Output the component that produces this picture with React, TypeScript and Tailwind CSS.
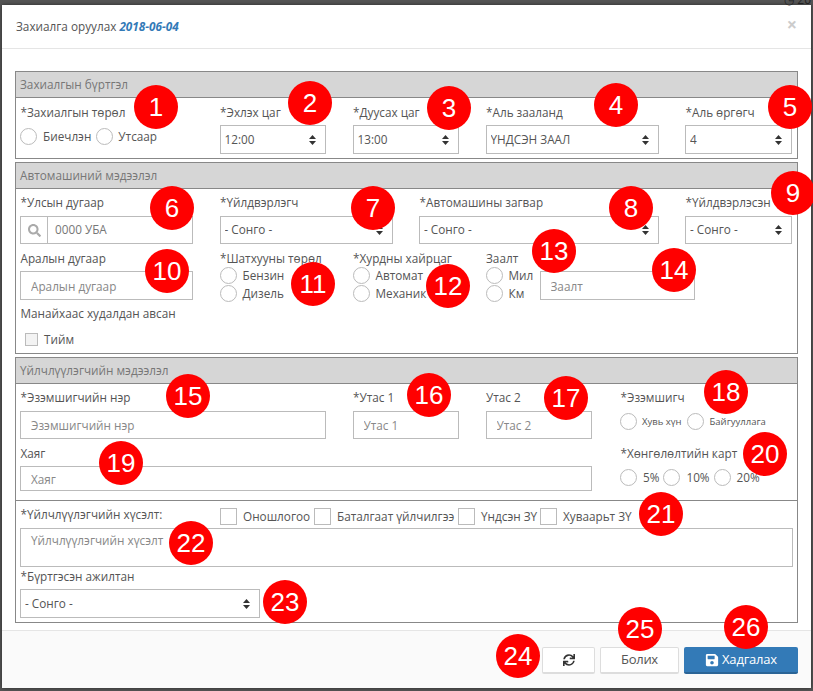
import type { ReactNode } from "react";
import { FaSave, FaSearch, FaSync } from "react-icons/fa";

const BADGES = [
  { n: 1, pos: "left-[134px] top-[85px]" },
  { n: 2, pos: "left-[288px] top-[81px]" },
  { n: 3, pos: "left-[427px] top-[86px]" },
  { n: 4, pos: "left-[594px] top-[83px]" },
  { n: 5, pos: "left-[768px] top-[85px]" },
  { n: 6, pos: "left-[150px] top-[186px]" },
  { n: 7, pos: "left-[351px] top-[186px]" },
  { n: 8, pos: "left-[609px] top-[186px]" },
  { n: 9, pos: "left-[771px] top-[171px]" },
  { n: 10, pos: "left-[145px] top-[249px]" },
  { n: 11, pos: "left-[291px] top-[262px]" },
  { n: 12, pos: "left-[426px] top-[264px]" },
  { n: 13, pos: "left-[532px] top-[229px]" },
  { n: 14, pos: "left-[652px] top-[248px]" },
  { n: 15, pos: "left-[166px] top-[374px]" },
  { n: 16, pos: "left-[407px] top-[373px]" },
  { n: 17, pos: "left-[544px] top-[376px]" },
  { n: 18, pos: "left-[704px] top-[370px]" },
  { n: 19, pos: "left-[99px] top-[441px]" },
  { n: 20, pos: "left-[743px] top-[432px]" },
  { n: 21, pos: "left-[639px] top-[492px]" },
  { n: 22, pos: "left-[169px] top-[521px]" },
  { n: 23, pos: "left-[263px] top-[580px]" },
  { n: 24, pos: "left-[496px] top-[634px]" },
  { n: 25, pos: "left-[618px] top-[607px]" },
  { n: 26, pos: "left-[724px] top-[605px]" }
];

function Label({ children, className = "" }: { children: ReactNode; className?: string }) {
  return <div className={`h-[17px] whitespace-nowrap pl-[0.5px] text-[11.75px] leading-[17px] ${className}`}>{children}</div>;
}

function Radio({ label, className = "ml-[6px]" }: { label: string; className?: string }) {
  return (
    <label className="flex h-[17px] items-center">
      <span className="h-[17px] w-[17px] shrink-0 rounded-full border border-[#bbb] bg-white" />
      <span className={`whitespace-nowrap leading-[17px] ${className}`}>{label}</span>
    </label>
  );
}

function Check({ label, className = "" }: { label: string; className?: string }) {
  return (
    <label className={`flex items-center ${className}`}>
      <span className="h-[17px] w-[17px] shrink-0 border border-[#bbb] bg-white" />
      <span className="ml-[6px] whitespace-nowrap">{label}</span>
    </label>
  );
}

function TextInput({ placeholder, className = "h-[29px]" }: { placeholder: string; className?: string }) {
  return (
    <input
      placeholder={placeholder}
      className={`block w-full border border-[#bbb] bg-white px-[10px] text-[11.75px] outline-none placeholder:text-[#888] ${className}`}
    />
  );
}

function Select({ value, className = "h-[29px]" }: { value: string; className?: string }) {
  return (
    <div className={`relative w-full ${className}`}>
      <select className="block h-full w-full appearance-none rounded-none border border-[#bbb] bg-white pl-[4px] pr-[20px] text-[11.75px] text-[#555] outline-none">
        <option>{value}</option>
      </select>
      <svg className="absolute right-[10px] top-1/2 -translate-y-1/2" width="7" height="10" viewBox="0 0 7 10" fill="#333">
        <path d="M3.5 0 7 4H0zM3.5 10 0 6h7z" />
      </svg>
    </div>
  );
}

function SectionHead({ children }: { children: ReactNode }) {
  return (
    <div className="h-[26px] border-b border-[#888] bg-[#d6d6d6] pl-[4px] text-[11.75px] leading-[25px] text-[#777]">
      {children}
    </div>
  );
}

const GRID = "grid grid-cols-12 gap-x-[26.5px]";

export default function App() {
  return (
    <div className="relative h-[691px] w-[813px] overflow-hidden bg-[#555] pl-[2px] pt-[5px] font-['Open_Sans',sans-serif] text-[11.75px] text-[#555]">
      <span className="absolute right-[2px] top-[-9px] text-[12px] text-[#222]">◷ 20</span>

      <div className="flex h-[683px] w-[809px] flex-col bg-white shadow-[0_0_4px_rgba(0,0,0,0.5)]">
        <div className="flex h-[44px] items-center justify-between border-b border-[#e5e5e5] pl-[14px] pr-[14px]">
          <div>
            Захиалга оруулах <b className="italic text-[#337ab7]">2018-06-04</b>
          </div>
          <span className="mb-[5px] text-[18px] font-bold leading-none text-[#ccc]">×</span>
        </div>

        <div className="flex-1 px-[13px] pt-[22px]">
          <div className="w-[783px] border border-[#888]">
            <SectionHead>Захиалгын бүртгэл</SectionHead>
            <div className={`${GRID} pb-[4px] pl-[4px] pr-[5.5px] pt-[6px]`}>
              <div className="col-span-3">
                <Label>*Захиалгын төрөл</Label>
                <div className="mt-[7px] flex gap-[5px]">
                  <Radio label="Биечлэн" />
                  <Radio label="Утсаар" className="ml-[5px]" />
                </div>
              </div>
              <div className="col-span-2">
                <Label className="mb-[4px]">*Эхлэх цаг</Label>
                <Select value="12:00" />
              </div>
              <div className="col-span-2">
                <Label className="mb-[4px]">*Дуусах цаг</Label>
                <Select value="13:00" />
              </div>
              <div className="col-span-3">
                <Label className="mb-[4px]">*Аль зааланд</Label>
                <Select value="ҮНДСЭН ЗААЛ" />
              </div>
              <div className="col-span-2">
                <Label className="mb-[4px]">*Аль өргөгч</Label>
                <Select value="4" />
              </div>
            </div>
          </div>

          <div className="mt-[3px] w-[783px] border border-[#888]">
            <SectionHead>Автомашиний мэдээлэл</SectionHead>
            <div className={`${GRID} pl-[4px] pr-[5.5px] pt-[5px]`}>
              <div className="col-span-3">
                <Label className="mb-[5px]">*Улсын дугаар</Label>
                <div className="flex h-[28px] border border-[#bbb] bg-white">
                  <span className="flex w-[27px] items-center justify-center border-r border-[#bbb] text-[#aaa]">
                    <FaSearch size={13} />
                  </span>
                  <input placeholder="0000 УБА" className="min-w-0 flex-1 px-[7px] text-[11.75px] outline-none placeholder:text-[#777]" />
                </div>
              </div>
              <div className="col-span-3">
                <Label className="mb-[5px]">*Үйлдвэрлэгч</Label>
                <Select value="- Сонго -" className="h-[28px]" />
              </div>
              <div className="col-span-4">
                <Label className="mb-[5px]">*Автомашины загвар</Label>
                <Select value="- Сонго -" className="h-[28px]" />
              </div>
              <div className="col-span-2">
                <Label className="mb-[5px]">*Үйлдвэрлэсэн</Label>
                <Select value="- Сонго -" className="h-[28px]" />
              </div>
            </div>
            <div className={`${GRID} mt-[6px] pl-[4px] pr-[5.5px]`}>
              <div className="col-span-3">
                <Label className="mb-[4px]">Аралын дугаар</Label>
                <TextInput placeholder="Аралын дугаар" />
              </div>
              <div className="col-span-2">
                <Label>*Шатхууны төрөл</Label>
                <div className="flex flex-col gap-px">
                  <Radio label="Бензин" />
                  <Radio label="Дизель" />
                </div>
              </div>
              <div className="col-span-2">
                <Label>*Хурдны хайрцаг</Label>
                <div className="flex flex-col gap-px">
                  <Radio label="Автомат" />
                  <Radio label="Механик" />
                </div>
              </div>
              <div className="col-span-5 flex">
                <div className="w-[54px]">
                  <Label>Заалт</Label>
                  <div className="flex flex-col gap-px">
                    <Radio label="Мил" />
                    <Radio label="Км" />
                  </div>
                </div>
                <div className="w-[155px] pt-[21px]">
                  <TextInput placeholder="Заалт" />
                </div>
              </div>
            </div>
            <div className="px-[4px] pb-[7px] pt-[3px]">
              <Label>Манайхаас худалдан авсан</Label>
              <label className="ml-[5px] mt-[11px] flex h-[13px] items-center">
                <span className="h-[13px] w-[13px] border border-[#bbb] bg-[#f3f3f3]" />
                <span className="ml-[6px]">Тийм</span>
              </label>
            </div>
          </div>

          <div className="mt-[3px] w-[783px] border border-[#888]">
            <SectionHead>Үйлчлүүлэгчийн мэдээлэл</SectionHead>
            <div className={`${GRID} pb-[9px] pl-[4px] pr-[5.5px] pt-[5px]`}>
              <div className="col-span-5">
                <Label className="mb-[5px]">*Эзэмшигчийн нэр</Label>
                <TextInput placeholder="Эзэмшигчийн нэр" className="h-[28px]" />
              </div>
              <div className="col-span-2">
                <Label className="mb-[5px]">*Утас 1</Label>
                <TextInput placeholder="Утас 1" className="h-[28px]" />
              </div>
              <div className="col-span-2">
                <Label className="mb-[5px]">Утас 2</Label>
                <TextInput placeholder="Утас 2" className="h-[28px]" />
              </div>
              <div className="col-span-3 row-span-2 pl-[1.5px]">
                <Label>*Эзэмшигч</Label>
                <div className="mt-[7px] flex gap-[5px]">
                  <Radio label="Хувь хүн" className="ml-[5px] text-[9.5px]" />
                  <Radio label="Байгууллага" className="ml-[6px] text-[9.5px]" />
                </div>
                <Label className="mt-[15px]">*Хөнгөлөлтийн карт</Label>
                <div className="mt-[7px] flex gap-[4px]">
                  <Radio label="5%" />
                  <Radio label="10%" />
                  <Radio label="20%" />
                </div>
              </div>
              <div className="col-span-9 mt-[6px]">
                <Label className="mb-[4px]">Хаяг</Label>
                <TextInput placeholder="Хаяг" className="h-[25px]" />
              </div>
            </div>
            <div className="border-t border-[#888] px-[4px] pb-[4px]">
              <div className="flex h-[27px] items-start">
                <Label className="mt-[5px] w-[200px]">*Үйлчлүүлэгчийн хүсэлт:</Label>
                <div className="mt-[7px] flex">
                  <Check label="Оношлогоо" className="w-[94px]" />
                  <Check label="Баталгаат үйлчилгээ" className="w-[144px]" />
                  <Check label="Үндсэн ЗҮ" className="w-[82px]" />
                  <Check label="Хуваарьт ЗҮ" />
                </div>
              </div>
              <textarea
                placeholder="Үйлчлүүлэгчийн хүсэлт"
                className="block h-[39px] w-[773px] resize-none border border-[#bbb] px-[10px] py-[3px] text-[11.75px] outline-none placeholder:text-[#888]"
              />
              <Label className="mb-[4px] mt-[1px]">*Бүртгэсэн ажилтан</Label>
              <div className="w-[240px]">
                <Select value="- Сонго -" />
              </div>
            </div>
          </div>
        </div>

        <div className="flex h-[58px] justify-end gap-[5px] border-t border-[#e5e5e5] bg-[#fafafa] pr-[13px] pt-[16px]">
          <button type="button" className="flex h-[27px] w-[53px] items-center justify-center rounded-[2px] border border-b-2 border-[#ddd] bg-white text-[#333]">
            <FaSync size={12} />
          </button>
          <button type="button" className="h-[27px] w-[79px] rounded-[2px] border border-b-2 border-[#ddd] bg-white text-[13px] tracking-[-0.3px]">
            Болих
          </button>
          <button type="button" className="flex h-[27px] w-[114px] items-center justify-center gap-[3px] rounded-[2px] border-b-2 border-[#2a6496] bg-[#337ab7] text-[13px] tracking-[-0.2px] text-white">
            <FaSave size={14} />
            Хадгалах
          </button>
        </div>
      </div>

      {BADGES.map((badge) => (
        <div
          key={badge.n}
          className={`absolute flex h-[44px] w-[44px] items-center justify-center rounded-full bg-[#ff0000] font-['Liberation_Sans',sans-serif] text-[26px] text-white ${badge.pos}`}
        >
          {badge.n}
        </div>
      ))}
    </div>
  );
}
